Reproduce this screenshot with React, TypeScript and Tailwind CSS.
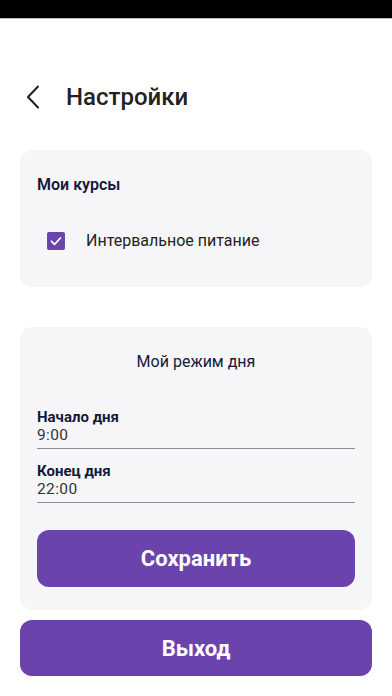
import { useState } from "react";

function TimeField({ label, value }: { label: string; value: string }) {
    return (
        <div className="border-b border-[#8a8a8f]">
            <div className="text-[15px] leading-[18px] font-bold text-[#14193a]">{label}</div>
            <div className="text-[15.5px] leading-[18px] text-[#333] pb-[4px] tracking-wide">{value}</div>
        </div>
    );
}

export default function App() {
    const [checked, setChecked] = useState(true);

    return (
        <div className="w-[392px] h-[696px] bg-white overflow-hidden" style={{ fontFamily: "Roboto, 'Noto Sans', sans-serif" }}>
            <div className="h-[19px] bg-black border-b border-[#bdbdbd]"></div>

            <div className="flex items-center h-[24px] mt-[66px] pl-[26px]">
                <svg width="14" height="24" viewBox="0 0 14 24" fill="none" stroke="#1f1f1f" strokeWidth="2" strokeLinecap="round" strokeLinejoin="round">
                    <path d="M12 1.5L2 12l10 10.5" />
                </svg>
                <span className="ml-[26px] text-[24px] font-medium text-[#222]">Настройки</span>
            </div>

            <div className="mx-5 mt-[41px] rounded-[12px] bg-[#f6f6f8] pt-[25px] pb-[37px] px-[17px]">
                <div className="text-[16px] leading-[20px] font-semibold text-[#14193a]">Мои курсы</div>
                <label className="flex items-center mt-[37px] ml-[10px] h-[18px] cursor-pointer">
                    <button
                        onClick={() => setChecked(!checked)}
                        className={"w-[18px] h-[18px] rounded-[2px] flex items-center justify-center " + (checked ? "bg-[#6b43ad]" : "border-2 border-[#6b43ad]")}
                    >
                        {checked && (
                            <svg width="12" height="12" viewBox="0 0 12 12" fill="none" stroke="white" strokeWidth="1.8" strokeLinecap="round" strokeLinejoin="round">
                                <path d="M1.5 6.3l3 3L10.5 3" />
                            </svg>
                        )}
                    </button>
                    <span className="ml-[21px] text-[16px] text-[#222]">Интервальное питание</span>
                </label>
            </div>

            <div className="mx-5 mt-[40px] rounded-[12px] bg-[#f6f6f8] pt-[25px] pb-[23px] px-[17px]">
                <div className="text-center text-[16px] leading-[20px] font-normal text-[#14193a]">Мой режим дня</div>
                <div className="mt-[36px]">
                    <TimeField label="Начало дня" value="9:00" />
                </div>
                <div className="mt-[13px]">
                    <TimeField label="Конец дня" value="22:00" />
                </div>
                <button className="mt-[27px] w-full h-[57px] rounded-[12px] bg-[#6b43ad] text-white text-[22px] font-bold">
                    Сохранить
                </button>
            </div>

            <div className="mx-5 mt-[10px]">
                <button className="w-full h-[56px] rounded-[12px] bg-[#6b43ad] text-white text-[22px] font-bold">Выход</button>
            </div>
        </div>
    );
}
